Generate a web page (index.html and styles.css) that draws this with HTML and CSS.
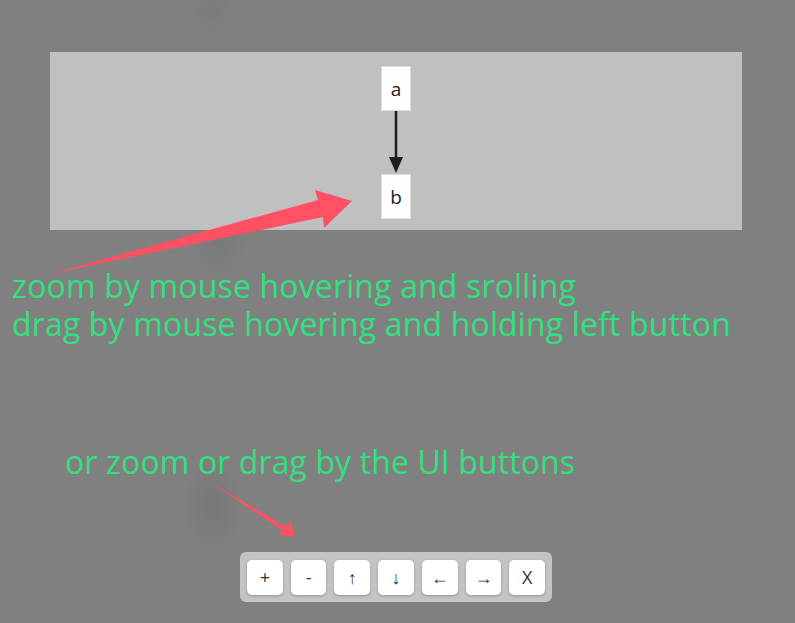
FILE: index.html
```html
<!DOCTYPE html>
<html>
<head>
<meta charset="utf-8">
<link rel="stylesheet" href="styles.css">
</head>
<body>
<div class="page">
  <div class="panel">
    <div class="node">a</div>
    <svg class="edge" width="16" height="63" viewBox="0 0 16 63">
      <line x1="8" y1="0" x2="8" y2="48" stroke="#1e1e1e" stroke-width="2.5"/>
      <polygon points="1,46 15,46 8,62" fill="#1e1e1e"/>
    </svg>
    <div class="node">b</div>
  </div>
  <div class="help">
    <p>zoom by mouse hovering and srolling</p>
    <p>drag by mouse hovering and holding left button</p>
  </div>
  <p class="help2">or zoom or drag by the UI buttons</p>
  <div class="toolbar">
    <button class="btn">+</button>
    <button class="btn">-</button>
    <button class="btn">↑</button>
    <button class="btn">↓</button>
    <button class="btn">←</button>
    <button class="btn">→</button>
    <button class="btn">X</button>
  </div>
  <svg class="annot" width="795" height="623" viewBox="0 0 795 623">
    <polygon points="50,274 318,200 315,190 352,201 324,228 323,217" fill="#ff5064"/>
    <polygon points="207,480 284,526 291,522 295,537 279,535 282,530" fill="#ff5064"/>
  </svg>
</div>
</body>
</html>
```
FILE: styles.css
```css
html, body {
  margin: 0;
  padding: 0;
}
body {
  background:
    radial-gradient(ellipse 30px 50px at 213px 505px, rgba(0,0,0,0.07), rgba(0,0,0,0)),
    radial-gradient(ellipse 30px 40px at 218px 245px, rgba(0,0,0,0.05), rgba(0,0,0,0)),
    radial-gradient(ellipse 25px 25px at 212px 10px, rgba(0,0,0,0.04), rgba(0,0,0,0)),
    #808080;
  font-family: "Open Sans", "Noto Sans", sans-serif;
  width: 795px;
  height: 623px;
  overflow: hidden;
}
.page {
  position: relative;
  width: 795px;
  height: 623px;
  display: flex;
  flex-direction: column;
}
.panel {
  margin: 52px 0 0 50px;
  width: 692px;
  height: 178px;
  background: #c0c0c0;
  display: flex;
  flex-direction: column;
  align-items: center;
  padding-top: 14px;
  box-sizing: border-box;
}
.node {
  width: 30px;
  height: 45px;
  box-sizing: border-box;
  background: #fefefe;
  border: 1px solid #dedede;
  display: flex;
  align-items: center;
  justify-content: center;
  font-size: 19px;
  color: #222;
}
.edge {
  display: block;
}
.help {
  margin: 37px 0 0 12px;
  color: #32e07e;
  font-size: 32px;
  line-height: 38px;
  letter-spacing: 0.15px;
}
.help p, .help2 {
  margin: 0;
  white-space: nowrap;
}
.help2 {
  margin: 100px 0 0 65px;
  color: #32e07e;
  font-size: 32px;
  line-height: 38px;
  letter-spacing: 0.1px;
}
.toolbar {
  margin: 71px 0 0 240px;
  width: 312px;
  height: 50px;
  box-sizing: border-box;
  background: #c4c4c4;
  border-radius: 6px;
  display: flex;
  align-items: center;
  gap: 8px;
  padding: 0 7px;
}
.btn {
  width: 36px;
  height: 35px;
  border: none;
  border-radius: 5px;
  background: #fff;
  box-shadow: 0 1px 3px rgba(0,0,0,0.25);
  font-family: "Open Sans", "Noto Sans", sans-serif;
  font-size: 18px;
  color: #333;
  padding: 0;
  display: flex;
  align-items: center;
  justify-content: center;
}
.annot {
  position: absolute;
  left: 0;
  top: 0;
  pointer-events: none;
}
```
